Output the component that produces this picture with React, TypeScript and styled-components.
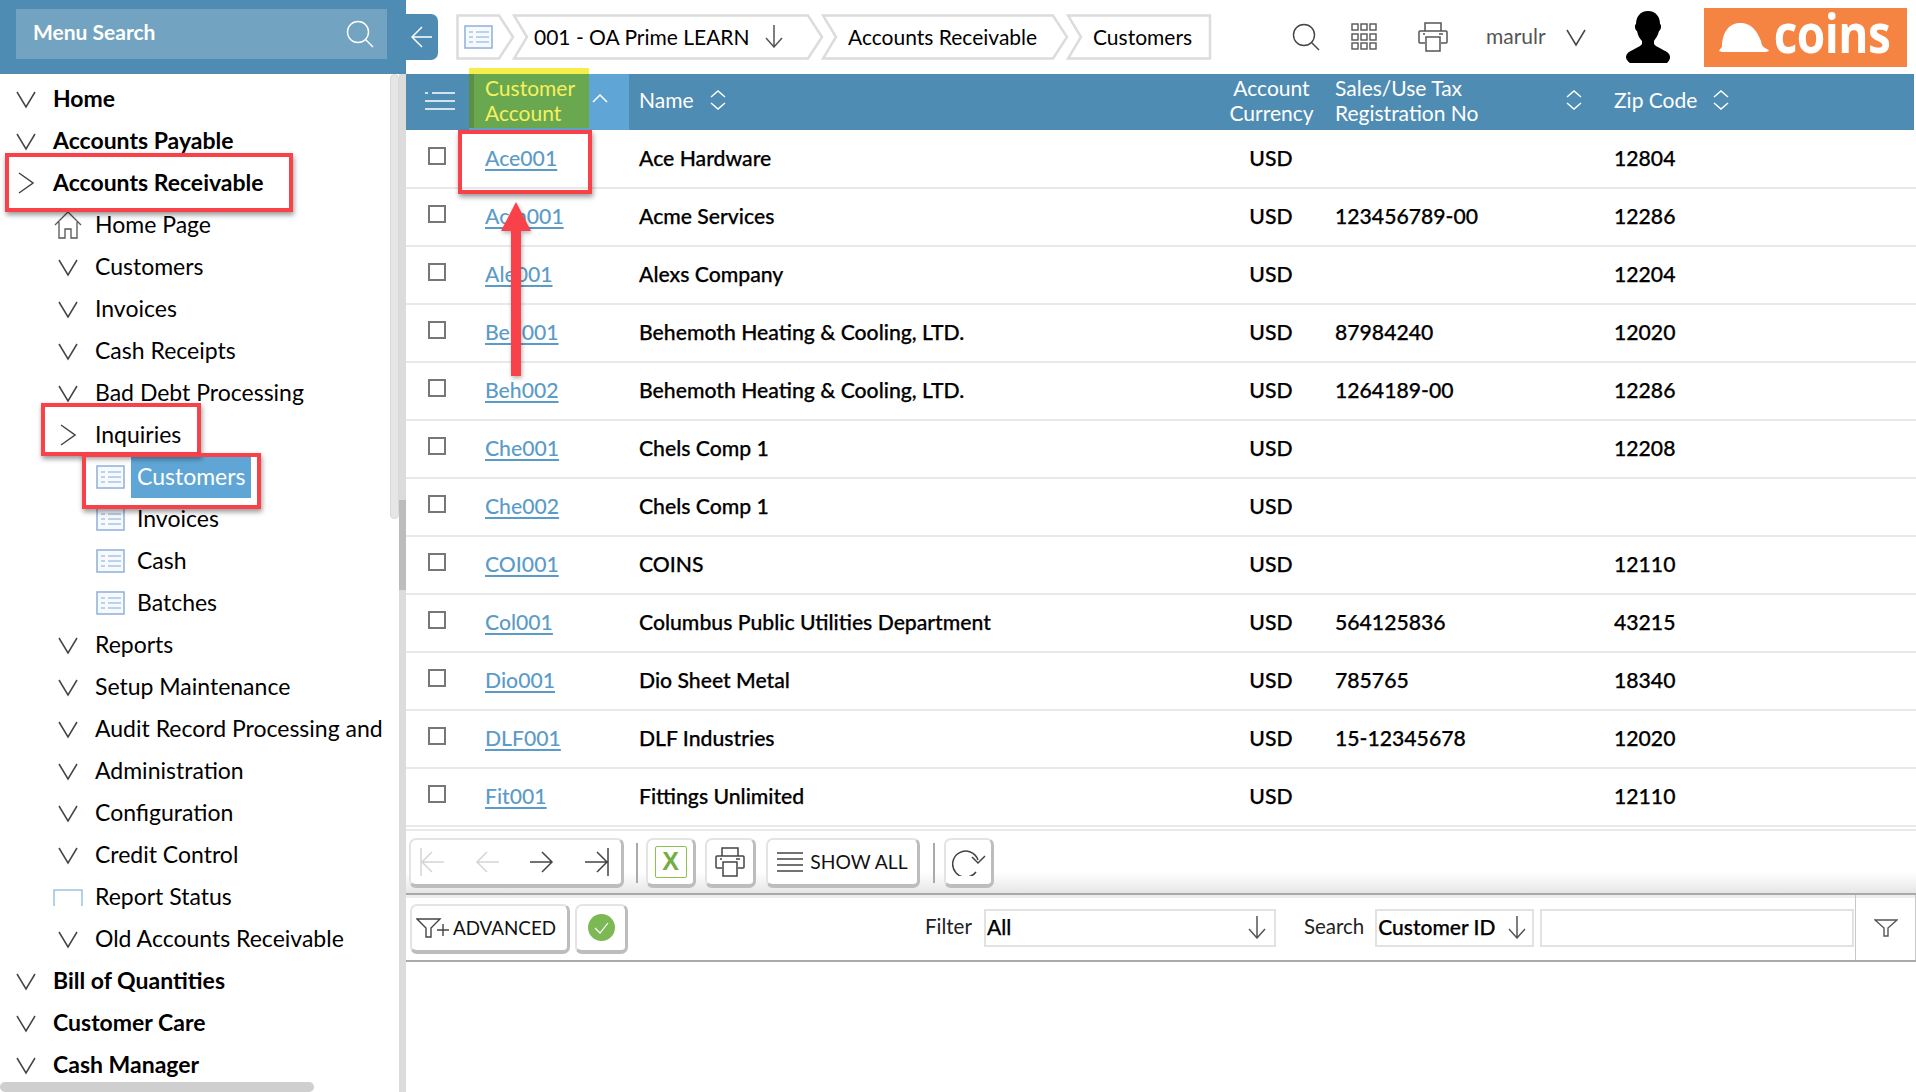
import React from 'react'
import styled, { createGlobalStyle } from 'styled-components'

const Global = createGlobalStyle`
    * { box-sizing: border-box; }
    html, body { margin: 0; padding: 0; background: #fff; }
    body { font-family: Lato, "Open Sans", sans-serif; color: #000; overflow: hidden; }
`

type TreeItem = { label: string; level: number; icon: 'down' | 'right' | 'list' | 'home' | 'blank'; selected?: boolean }

const tree: TreeItem[] = [
    { label: 'Home', level: 0, icon: 'down' },
    { label: 'Accounts Payable', level: 0, icon: 'down' },
    { label: 'Accounts Receivable', level: 0, icon: 'right' },
    { label: 'Home Page', level: 1, icon: 'home' },
    { label: 'Customers', level: 1, icon: 'down' },
    { label: 'Invoices', level: 1, icon: 'down' },
    { label: 'Cash Receipts', level: 1, icon: 'down' },
    { label: 'Bad Debt Processing', level: 1, icon: 'down' },
    { label: 'Inquiries', level: 1, icon: 'right' },
    { label: 'Customers', level: 2, icon: 'list', selected: true },
    { label: 'Invoices', level: 2, icon: 'list' },
    { label: 'Cash', level: 2, icon: 'list' },
    { label: 'Batches', level: 2, icon: 'list' },
    { label: 'Reports', level: 1, icon: 'down' },
    { label: 'Setup Maintenance', level: 1, icon: 'down' },
    { label: 'Audit Record Processing and', level: 1, icon: 'down' },
    { label: 'Administration', level: 1, icon: 'down' },
    { label: 'Configuration', level: 1, icon: 'down' },
    { label: 'Credit Control', level: 1, icon: 'down' },
    { label: 'Report Status', level: 1, icon: 'blank' },
    { label: 'Old Accounts Receivable', level: 1, icon: 'down' },
    { label: 'Bill of Quantities', level: 0, icon: 'down' },
    { label: 'Customer Care', level: 0, icon: 'down' },
    { label: 'Cash Manager', level: 0, icon: 'down' },
]

const customers = [
    ['Ace001', 'Ace Hardware', '', '12804'],
    ['Acm001', 'Acme Services', '123456789-00', '12286'],
    ['Ale001', 'Alexs Company', '', '12204'],
    ['Beh001', 'Behemoth Heating & Cooling, LTD.', '87984240', '12020'],
    ['Beh002', 'Behemoth Heating & Cooling, LTD.', '1264189-00', '12286'],
    ['Che001', 'Chels Comp 1', '', '12208'],
    ['Che002', 'Chels Comp 1', '', ''],
    ['COI001', 'COINS', '', '12110'],
    ['Col001', 'Columbus Public Utilities Department', '564125836', '43215'],
    ['Dio001', 'Dio Sheet Metal', '785765', '18340'],
    ['DLF001', 'DLF Industries', '15-12345678', '12020'],
    ['Fit001', 'Fittings Unlimited', '', '12110'],
]

const crumbs = [
    { width: 312, label: '001 - OA Prime LEARN', arrow: true },
    { width: 248, label: 'Accounts Receivable' },
    { width: 146, label: 'Customers', last: true },
]

// thin line icons, all drawn on their own little grid
const Svg = styled.svg<{ $color?: string; $sw?: number }>`
    display: block;
    flex: none;
    fill: none;
    stroke: ${p => p.$color || '#444'};
    stroke-width: ${p => p.$sw || 1.5};
`

const Icon = ({ w, h, d, color, sw }: { w: number; h: number; d: string; color?: string; sw?: number }) => (
    <Svg width={w} height={h} viewBox={`0 0 ${w} ${h}`} $color={color} $sw={sw}><path d={d} /></Svg>
)

const ChevronDown = () => <Icon w={20} h={19} d="M1 2 L10 17 L19 2" />
const ChevronRight = () => <Icon w={16} h={22} d="M1 1 L15 11 L1 21" />
const SortBoth = () => <Icon w={16} h={20} d="M1 7 L8 1 L15 7 M1 13 L8 19 L15 13" color="#fff" />
const ArrowDown = ({ h = 24 }: { h?: number }) => <Icon w={18} h={h} d={`M9 1 V${h - 1} M1 ${h - 10} L9 ${h - 1} L17 ${h - 10}`} color="#555" />

const ListIcon = () => (
    <Svg width={29} height={24} viewBox="0 0 29 24" $color="#a9c4e4" $sw={1.5}>
        <rect x="1" y="1" width="27" height="22" fill="#f6f9fd" stroke="#8fb0da" strokeWidth="1.5" />
        <path d="M5 7 H9 M12 7 H25 M5 12 H9 M12 12 H25 M5 17 H9 M12 17 H25" />
    </Svg>
)

const HomeIcon = () => (
    <Svg width={28} height={28} viewBox="0 0 28 28" $color="#555" $sw={1.3}>
        <path d="M1 14 L14 1 L27 14 M5 11 V27 H11 V18 H17 V27 H23 V11" />
    </Svg>
)

const BlankIcon = () => <Icon w={30} h={17} d="M1 17 V1 H29 V17" color="#9cc3df" />

const SearchIcon = ({ color = '#444', size = 28 }: { color?: string; size?: number }) => (
    <Svg width={size} height={size} viewBox="0 0 28 28" $color={color} $sw={1.4}>
        <circle cx="12" cy="12" r="10.5" />
        <path d="M19.5 19.5 L27 27" />
    </Svg>
)

const PrinterIcon = ({ color = '#555' }: { color?: string }) => (
    <Svg width={30} height={30} viewBox="0 0 30 30" $color={color} $sw={1.5}>
        <path d="M7 9 V1 H23 V9 M7 21 H2 Q1 21 1 20 V10 Q1 9 2 9 H28 Q29 9 29 10 V20 Q29 21 28 21 H23 M8 15 H22 V29 H8 Z M5 12 H7 M21 12 H25" />
    </Svg>
)

const GridIcon = () => (
    <Svg width={26} height={28} viewBox="0 0 26 28" $color="#555" $sw={1.4}>
        {[1, 11, 20].map(y => [1, 10, 19].map(x => <rect key={`${x}-${y}`} x={x} y={y} width="6" height="6" />))}
    </Svg>
)

const Avatar = () => (
    <svg width={46} height={52} viewBox="0 0 46 52" style={{ display: 'block' }}>
        <path fill="#000" d="M23 0 C31 0 35 6 35 13 C37 14 36 19 34 20 C33 25 30 28 29 30 V33 C32 37 41 39 44 43 C46 46 45 49 42 52 H5 C1 49 0 46 2 43 C5 39 14 37 17 33 V30 C15 28 13 25 12 20 C10 19 9 14 11 13 C11 6 15 0 23 0 Z" />
    </svg>
)

const HardHat = () => (
    <svg width={50} height={29} viewBox="0 0 50 29" style={{ display: 'block', flex: 'none' }}>
        <path fill="#fff" d="M0 28 C1 26 2 25 3 24 C3 12 8 1 20 0 C32 -1 38 8 42 18 C42 21 44 24 46 25 C48 26 50 27 50 28 L47 29 H3 Z" />
    </svg>
)

const MenuLines = () => <Icon w={30} h={20} d="M0 2 H3 M7 2 H30 M0 10 H30 M0 18 H30" color="#fff" sw={1.5} />

const FunnelPlusIcon = () => (
    <Svg width={33} height={20} viewBox="0 0 33 20" $color="#444" $sw={1.4}>
        <path d="M1 1 H24 L15 10 V19 H10 V10 Z" />
        <path d="M21 12 H33 M27 6 V18" />
    </Svg>
)

const FunnelIcon = () => (
    <Svg width={24} height={18} viewBox="0 0 24 18" $color="#555" $sw={1.4}>
        <path d="M1 1 H23 L14 9 V17 H10 V9 Z" />
    </Svg>
)

const Page = styled.div`
    position: relative;
    width: 1916px;
    height: 1092px;
    display: flex;
    overflow: hidden;
`

const Sidebar = styled.aside`
    position: relative;
    width: 406px;
    flex: none;
    overflow: hidden;
`

const SearchBand = styled.div`
    height: 74px;
    background: #4f8cb3;
    padding: 9px 19px 15px 16px;
`

const SearchField = styled.div`
    height: 50px;
    background: #72a3c1;
    display: flex;
    align-items: center;
    justify-content: space-between;
    padding: 0 13px 0 17px;
    color: #fff;
    font-size: 21px;
    font-weight: 700;

    & > span {
        margin-top: -6px;
    }
`

const Tree = styled.ul`
    list-style: none;
    margin: 0;
    padding: 4px 0 0;
`

const TreeRow = styled.li<{ $level: number }>`
    height: 42px;
    display: flex;
    align-items: center;
    padding-left: ${p => p.$level * 42}px;
    font-size: 23px;
    font-weight: ${p => (p.$level === 0 ? 700 : 400)};
    white-space: nowrap;
`

const TreeSlot = styled.span`
    width: 53px;
    flex: none;
    display: flex;
    justify-content: center;
    padding-right: 1px;
`

const TreeLabel = styled.span<{ $selected?: boolean }>`
    margin-top: -2px;
    ${p => p.$selected && `
        background: #5fa6d6;
        color: #fff;
        margin: 0 0 0 -6px;
        padding: 0 6px;
        width: 120px;
        height: 42px;
        line-height: 40px;
    `}
`

const ScrollPill = styled.div`
    position: absolute;
    left: 390px;
    top: 74px;
    width: 9px;
    height: 445px;
    background: #e6e6e6;
    border: 1px solid #d8d8d8;
    border-radius: 5px;
`

const ScrollTrack = styled.div`
    position: absolute;
    left: 399px;
    top: 74px;
    bottom: 0;
    width: 7px;
    background: #dcdcdc;

    &::after {
        content: '';
        position: absolute;
        left: 0;
        right: 0;
        top: 426px;
        height: 90px;
        background: #bcbcbc;
    }
`

const ScrollBottom = styled.div`
    position: absolute;
    left: 0;
    bottom: 0;
    width: 314px;
    height: 10px;
    background: #cfcfcf;
    border-radius: 5px;
`

const Main = styled.main`
    flex: 1;
    min-width: 0;
    display: flex;
    flex-direction: column;
`

const TopBar = styled.header`
    height: 74px;
    display: flex;
    align-items: flex-start;
    padding-top: 14px;
`

const CollapseTab = styled.button`
    width: 32px;
    height: 46px;
    padding: 0;
    border: 0;
    border-radius: 0 7px 7px 0;
    background: #4f8cb3;
    display: flex;
    align-items: center;
    justify-content: center;
`

const Breadcrumb = styled.nav`
    display: flex;
    margin-left: 18px;
`

const HomeCrumb = styled.div`
    position: relative;
    width: 59px;
    height: 46px;
    margin-right: -3px;
    display: flex;
    align-items: center;
    padding-left: 8px;
`

const Crumb = styled.div<{ $width: number }>`
    position: relative;
    width: ${p => p.$width}px;
    height: 46px;
    margin-right: -3px;
    padding: 0 0 2px 27px;
    display: flex;
    align-items: center;
    gap: 15px;
    font-size: 21px;
    white-space: nowrap;
`

const CrumbFrame = styled.svg`
    position: absolute;
    inset: 0;
    fill: none;
    stroke: #dcdcdc;
    stroke-width: 2.5;
`

const FirstCrumb = styled(Crumb)`
    padding-left: 22px;
`

const TopItem = styled.div<{ $ml: number }>`
    margin-left: ${p => p.$ml}px;
    flex: none;
    display: flex;
    align-items: center;
    height: 46px;
`

const UserName = styled(TopItem)`
    padding-bottom: 4px;
    font-size: 21px;
    color: #555;
`

const Logo = styled.div`
    margin-left: 33px;
    margin-top: -6px;
    width: 203px;
    height: 59px;
    background: #f58342;
    display: flex;
    align-items: center;
    gap: 5px;
    padding: 0 0 0 15px;
`

const LogoText = styled.span`
    color: #fff;
    font-family: "Open Sans", sans-serif;
    font-size: 46px;
    font-weight: 700;
    letter-spacing: -0.5px;
    line-height: 59px;
    transform: scaleY(1.16) translateY(-4px);
`

const columns = '63px 160px 591px 103px 279px 1fr'

const TableHead = styled.div`
    display: grid;
    grid-template-columns: ${columns};
    height: 56px;
    margin-right: 2px;
    background: #4f8cb3;
    color: #fff;
    font-size: 21px;
    line-height: 25px;
    align-items: center;
`

const HeadMenu = styled.div`
    padding: 0 0 3px 19px;
`

const SortedHead = styled.div`
    position: relative;
    height: 56px;
    display: flex;
    background: #5fa6d6;

    &::before {
        content: '';
        position: absolute;
        left: 0;
        top: -6px;
        width: 120px;
        height: 6px;
        background: #f6ee4b;
    }
`

const SortedLabel = styled.div`
    width: 120px;
    height: 54px;
    padding: 1px 0 0 11px;
    background: #6aa84f;
    border-left: 5px solid #5b8f47;
    color: #f5f060;
`

const SortedArrow = styled.div`
    flex: 1;
    display: flex;
    padding: 20px 0 0 3px;
`

const HeadCell = styled.div<{ $center?: boolean }>`
    display: flex;
    align-items: center;
    justify-content: ${p => (p.$center ? 'center' : 'flex-start')};
    text-align: ${p => (p.$center ? 'center' : 'left')};
    gap: 16px;
    padding-left: ${p => (p.$center ? 0 : 10)}px;
    padding-bottom: 5px;
`

const SalesHead = styled(HeadCell)`
    justify-content: space-between;
    padding: 0 20px 5px 12px;
`

const ZipHead = styled(HeadCell)`
    padding-left: 12px;
`

const TableBody = styled.div`
    padding-top: 1px;
`

const Row = styled.div`
    display: grid;
    grid-template-columns: ${columns};
    height: 58px;
    padding-bottom: 3px;
    align-items: center;
    border-bottom: 2px solid #e9e9e9;
    font-size: 21.2px;
    font-weight: 500;
    -webkit-text-stroke: 0.25px #000;
`

const CheckCell = styled.div`
    padding-left: 22px;
`

const Check = styled.span`
    display: block;
    width: 18px;
    height: 18px;
    margin-top: -4px;
    border: 2px solid #777;
`

const RowLink = styled.a`
    padding-left: 16px;
    color: #5b9bc8;
    text-decoration: underline;
    text-underline-offset: 3px;
    -webkit-text-stroke: 0;
`

const NameCell = styled.div`
    padding-left: 10px;
`

const CurrencyCell = styled.div`
    text-align: center;
    padding-right: 1px;
`

const TextCell = styled.div`
    padding-left: 12px;
`

const Pager = styled.div`
    height: 66px;
    margin-top: 2px;
    padding: 1px 0 0 3px;
    border-top: 2px solid #e9e9e9;
    border-bottom: 2px solid #a9a9a9;
    background: linear-gradient(#fff 66%, #e6e6e6);
    display: flex;
    align-items: center;
`

const Button = styled.button<{ $w: number; $ml?: number; $fs?: number }>`
    width: ${p => p.$w}px;
    height: 50px;
    margin-left: ${p => p.$ml || 0}px;
    flex: none;
    padding: 0;
    display: flex;
    align-items: center;
    justify-content: center;
    background: #fff;
    border: 2px solid #e4e4e4;
    border-right: 3px solid #bdbdbd;
    border-bottom: 4px solid #bdbdbd;
    border-radius: 7px;
    font-family: inherit;
    font-size: ${p => p.$fs || 20}px;
    color: #111;
`

const NavButton = styled(Button)`
    justify-content: flex-start;
    gap: 31px;
    padding-left: 9px;
`

const LabelButton = styled(Button)`
    gap: 7px;
`

const AdvancedButton = styled(Button)`
    justify-content: flex-start;
    gap: 4px;
    padding-left: 4px;
    margin-top: 2px;
`

const StatusButton = styled(Button)`
    margin-top: 2px;
`

const ToolSep = styled.span<{ $ml: number }>`
    width: 2px;
    height: 40px;
    margin-left: ${p => p.$ml}px;
    background: #aaa;
    flex: none;
`

const ExcelMark = styled.span`
    width: 32px;
    height: 32px;
    border: 1.5px solid #8bc34a;
    border-radius: 2px;
    display: flex;
    align-items: center;
    justify-content: center;
    color: #74ad42;
    font-family: "Liberation Sans", sans-serif;
    font-size: 25px;
    font-weight: 700;
`

const GreenDot = styled.span`
    width: 27px;
    height: 27px;
    border-radius: 50%;
    background: #7cb955;
    display: flex;
    align-items: center;
    justify-content: center;
`

const FilterBar = styled.div`
    height: 67px;
    padding-left: 4px;
    border-bottom: 2px solid #a9a9a9;
    display: flex;
    align-items: center;
    box-shadow: inset 0 3px 0 #eee;
`

const FieldLabel = styled.span<{ $ml: number }>`
    margin-left: ${p => p.$ml}px;
    padding-bottom: 3px;
    font-size: 20.5px;
    color: #222;
`

const SelectBox = styled.div<{ $w: number; $ml: number; $px?: number }>`
    width: ${p => p.$w}px;
    height: 38px;
    margin-left: ${p => p.$ml}px;
    padding: 0 ${p => p.$px ?? 6}px 2px 1px;
    flex: none;
    display: flex;
    align-items: center;
    justify-content: space-between;
    border: 2.5px solid #e2e2e2;
    font-size: 21px;
    font-weight: 500;
    -webkit-text-stroke: 0.25px #000;
`

const FilterToggle = styled.div`
    margin-left: 1px;
    align-self: stretch;
    flex: 1;
    border-left: 1px solid #c8c8c8;
    border-right: 1px solid #c8c8c8;
    display: flex;
    align-items: center;
    justify-content: center;
`

const RedBox = styled.div<{ $x: number; $y: number; $w: number; $h: number }>`
    position: absolute;
    left: ${p => p.$x}px;
    top: ${p => p.$y}px;
    width: ${p => p.$w}px;
    height: ${p => p.$h}px;
    border: 4px solid #f9414a;
    box-shadow: 1px 3px 5px rgba(0, 0, 0, 0.4);
    pointer-events: none;
`

const RedArrow = styled.svg`
    position: absolute;
    left: 500px;
    top: 202px;
    filter: drop-shadow(1px 2px 2px rgba(0, 0, 0, 0.3));
`

function crumbPath(width: number, last?: boolean) {
    const right = last ? `L${width - 2} 1.5 L${width - 2} 44.5` : `L${width - 16} 1.5 L${width - 2} 23 L${width - 16} 44.5`
    return `M2 1.5 ${right} L2 44.5 L15 23 Z`
}

function TreeIcon({ icon }: { icon: TreeItem['icon'] }) {
    if (icon === 'down') return <ChevronDown />
    if (icon === 'right') return <ChevronRight />
    if (icon === 'home') return <HomeIcon />
    if (icon === 'list') return <ListIcon />
    return <BlankIcon />
}

export default function App() {
    return (
        <Page>
            <Global />
            <Sidebar>
                <SearchBand>
                    <SearchField>
                        <span>Menu Search</span>
                        <SearchIcon color="#fff" />
                    </SearchField>
                </SearchBand>
                <Tree>
                    {tree.map((item, i) => (
                        <TreeRow key={i} $level={item.level}>
                            <TreeSlot><TreeIcon icon={item.icon} /></TreeSlot>
                            <TreeLabel $selected={item.selected}>{item.label}</TreeLabel>
                        </TreeRow>
                    ))}
                </Tree>
                <ScrollPill />
                <ScrollTrack />
                <ScrollBottom />
            </Sidebar>

            <Main>
                <TopBar>
                    <CollapseTab>
                        <Icon w={22} h={22} d="M21 11 H1 M11 1 L1 11 L11 21" color="#fff" />
                    </CollapseTab>
                    <Breadcrumb>
                        <HomeCrumb>
                            <CrumbFrame width={59} height={46} viewBox="0 0 59 46">
                                <path d="M1.5 1.5 H43 L57 23 L43 44.5 H1.5 Z" />
                            </CrumbFrame>
                            <ListIcon />
                        </HomeCrumb>
                        {crumbs.map(c => {
                            const Box = c.arrow ? FirstCrumb : Crumb
                            return (
                                <Box key={c.label} $width={c.width}>
                                    <CrumbFrame width={c.width} height={46} viewBox={`0 0 ${c.width} 46`}>
                                        <path d={crumbPath(c.width, c.last)} />
                                    </CrumbFrame>
                                    {c.label}
                                    {c.arrow && <ArrowDown />}
                                </Box>
                            )
                        })}
                    </Breadcrumb>
                    <TopItem $ml={83}><SearchIcon /></TopItem>
                    <TopItem $ml={31}><GridIcon /></TopItem>
                    <TopItem $ml={41}><PrinterIcon /></TopItem>
                    <UserName $ml={38}>marulr</UserName>
                    <TopItem $ml={20}><ChevronDown /></TopItem>
                    <TopItem $ml={39}><Avatar /></TopItem>
                    <Logo>
                        <HardHat />
                        <LogoText>coins</LogoText>
                    </Logo>
                </TopBar>

                <TableHead>
                    <HeadMenu><MenuLines /></HeadMenu>
                    <SortedHead>
                        <SortedLabel>Customer Account</SortedLabel>
                        <SortedArrow><Icon w={16} h={9} d="M1 8 L8 1 L15 8" color="#fff" /></SortedArrow>
                    </SortedHead>
                    <HeadCell>Name <SortBoth /></HeadCell>
                    <HeadCell $center>Account Currency</HeadCell>
                    <SalesHead><span>Sales/Use Tax<br />Registration No</span><SortBoth /></SalesHead>
                    <ZipHead>Zip Code <SortBoth /></ZipHead>
                </TableHead>

                <TableBody>
                    {customers.map(c => (
                        <Row key={c[0]}>
                            <CheckCell><Check /></CheckCell>
                            <div><RowLink href="#">{c[0]}</RowLink></div>
                            <NameCell>{c[1]}</NameCell>
                            <CurrencyCell>USD</CurrencyCell>
                            <TextCell>{c[2]}</TextCell>
                            <TextCell>{c[3]}</TextCell>
                        </Row>
                    ))}
                </TableBody>

                <Pager>
                    <NavButton $w={215}>
                        <Icon w={24} h={28} d="M1 0 V28 M24 14 H2 M12 4 L2 14 L12 24" color="#d5d5d5" />
                        <Icon w={24} h={22} d="M24 11 H2 M12 1 L2 11 L12 21" color="#d5d5d5" />
                        <Icon w={24} h={22} d="M0 11 H22 M12 1 L22 11 L12 21" />
                        <Icon w={24} h={28} d="M23 0 V28 M0 14 H22 M12 4 L22 14 L12 24" />
                    </NavButton>
                    <ToolSep $ml={12} />
                    <Button $w={50} $ml={8}><ExcelMark>X</ExcelMark></Button>
                    <Button $w={51} $ml={9}><PrinterIcon color="#444" /></Button>
                    <LabelButton $w={154} $ml={10} $fs={19.3}>
                        <Icon w={26} h={20} d="M0 1 H26 M0 7 H26 M0 13 H26 M0 19 H26" />
                        SHOW ALL
                    </LabelButton>
                    <ToolSep $ml={13} />
                    <Button $w={50} $ml={9}>
                        <Icon w={34} h={28} d="M24 24 A13 13 0 1 1 26 12 M20 9 L26 15 L33 8" />
                    </Button>
                </Pager>

                <FilterBar>
                    <AdvancedButton $w={160} $fs={18.8}><FunnelPlusIcon /> ADVANCED</AdvancedButton>
                    <StatusButton $w={53} $ml={5}>
                        <GreenDot><Icon w={15} h={12} d="M1 6 L6 11 L14 1" color="#fff" sw={1.2} /></GreenDot>
                    </StatusButton>
                    <FieldLabel $ml={297}>Filter</FieldLabel>
                    <SelectBox $w={292} $ml={12} $px={8}>All <ArrowDown /></SelectBox>
                    <FieldLabel $ml={28}>Search</FieldLabel>
                    <SelectBox $w={159} $ml={11}>Customer ID <ArrowDown /></SelectBox>
                    <SelectBox $w={314} $ml={6} />
                    <FilterToggle><FunnelIcon /></FilterToggle>
                </FilterBar>
            </Main>

            <RedBox $x={5} $y={153} $w={288} $h={59} />
            <RedBox $x={41} $y={403} $w={160} $h={53} />
            <RedBox $x={82} $y={453} $w={179} $h={56} />
            <RedBox $x={458} $y={130} $w={134} $h={64} />
            <RedArrow width={32} height={176} viewBox="0 0 32 176">
                <path fill="#f9414a" d="M16 0 L31 29 H21 V174 H11 V29 H1 Z" />
            </RedArrow>
        </Page>
    )
}
